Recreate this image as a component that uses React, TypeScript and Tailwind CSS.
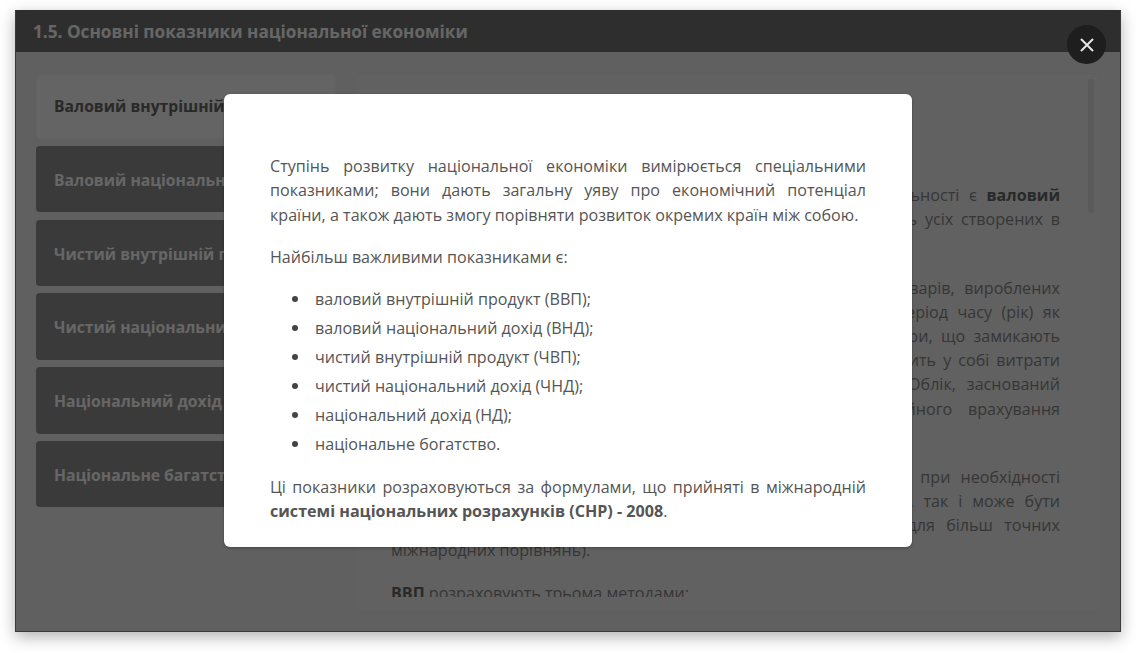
const tabs = [
  "Валовий національний дохід",
  "Чистий внутрішній продукт",
  "Чистий національний дохід",
  "Національний дохід",
  "Національне багатство",
];

const p2 = [
  "ВВП – це сукупна ринкова вартість усіх кінцевих послуг і товарів, вироблених",
  "у межах країни резидентами та нерезидентами за певний період часу (рік) як",
  "сума доданих вартостей, створених у всіх галузях, за всі товари, що замикають",
  "виробничий цикл; ця величина ніде не повторюється і не містить у собі витрати",
  "на проміжне споживання та виключає повторний рахунок. Облік, заснований",
  "на засадах системи національних рахунків, уникає подвійного врахування",
  "виробленої продукції.",
];
const p3 = [
  "ВВП обчислюють у поточних цінах в національній валюті, а при необхідності",
  "може бути перерахований як у долари, так і в іншу валюту, так і може бути",
  "переведений за паритетом купівельної спроможності (ПКС) для більш точних",
  "міжнародних порівнянь).",
];
const list = [
  "валовий внутрішній продукт (ВВП);",
  "валовий національний дохід (ВНД);",
  "чистий внутрішній продукт (ЧВП);",
  "чистий національний дохід (ЧНД);",
  "національний дохід (НД);",
  "національне богатство.",
];

function Lines({ lines }: { lines: string[] }) {
  return (
    <p className="mb-[20px]">
      {lines.map((l, i) => (
        <span
          key={l}
          className={i === lines.length - 1 ? "block" : "block [text-align-last:justify]"}
        >
          {l}
        </span>
      ))}
    </p>
  );
}

export default function App() {
  return (
    <div className="h-[653px] w-[1136px] overflow-hidden bg-white pl-[15px] pt-[10px] font-['Open_Sans',sans-serif]">
      <div className="relative flex h-[622px] w-[1106px] flex-col border-x border-b border-[#3a3a3a] bg-[#f0f0f0] shadow-[0_5px_15px_rgba(0,0,0,0.3)]">
        <header className="flex h-[42px] shrink-0 items-center bg-[#737373] pl-[17px] pt-[1px] text-[17.2px] font-bold text-white">
          1.5. Основні показники національної економіки
        </header>
        <div className="flex min-h-0 flex-1 gap-[20px] pb-[20px] pl-[20px] pr-[21px] pt-[22px]">
          <nav className="flex w-[300px] shrink-0 flex-col gap-[7.3px]">
            <div className="flex h-[64.5px] items-center rounded-[4px] border border-[#f5f5f5] bg-[#fafafa] pl-[17px] pt-[2px] text-[15.7px] font-bold text-[#666]">
              Валовий внутрішній продукт
            </div>
            {tabs.map((t) => (
              <div
                key={t}
                className="flex h-[66.5px] items-center rounded-[4px] bg-[#919191] pl-[18px] pt-[3px] text-[15.7px] font-bold text-white"
              >
                {t}
              </div>
            ))}
          </nav>
          <main className="relative min-w-0 flex-1 rounded-[4px] bg-[#f2f2f2] pb-[14px] shadow-[0_0_2px_rgba(0,0,0,0.05)]">
            <div className="h-full overflow-hidden pl-[35px] pr-[39px] pt-[109px] text-[16.1px] leading-[24.2px] text-[#888]">
              <p className="mb-[20px]">
                <span className="block [text-align-last:justify]">
                  Найважливішим узагальнюючим показником економічної діяльності є <b className="text-[#666]">валовий</b>
                </span>
                <span className="block [text-align-last:justify]">
                  внутрішній продукт (ВВП), що показує сукупну ринкову вартість усіх створених в
                </span>
                <span className="block">даній країні товарів і послуг.</span>
              </p>
              <Lines lines={p2} />
              <Lines lines={p3} />
              <p className="-mt-[1px]">
                <b className="text-[#666]">ВВП</b> розраховують трьома методами:
              </p>
            </div>
            <div className="absolute right-[5px] top-[5px] h-[134px] w-[6px] rounded-full bg-[#e2e2e2]" />
          </main>
        </div>

        <div className="absolute inset-0 flex items-center justify-center bg-black/60">
          <section className="w-[688px] rounded-[6px] bg-white px-[46px] pb-[23.5px] pt-[60px] text-[16.1px] leading-[24.5px] text-[#555] shadow-[0_1px_3px_rgba(0,0,0,0.3)]">
            <p className="mb-[18px] text-justify">
              Ступінь розвитку національної економіки вимірюється спеціальними показниками; вони дають загальну уяву про економічний потенціал країни, а також дають змогу порівняти розвиток окремих країн між собою.
            </p>
            <p className="mb-[17px]">Найбільш важливими показниками є:</p>
            <ul className="mb-[18.5px] pl-[22px]">
              {list.map((l) => (
                <li key={l} className="mb-[4.5px] flex items-center gap-[17px] last:mb-0">
                  <span className="h-[6px] w-[6px] shrink-0 rounded-full bg-[#444]" />
                  {l}
                </li>
              ))}
            </ul>
            <p className="text-justify">
              Ці показники розраховуються за формулами, що прийняті в міжнародній <b>системі національних розрахунків (СНР) - 2008</b>.
            </p>
          </section>
        </div>

        <button className="absolute left-[1051px] top-[15px] flex h-[39px] w-[39px] items-center justify-center rounded-full bg-[#1e1e1e] text-[#e6e6e6]">
          <svg width="16" height="16" viewBox="0 0 16 16" fill="none" stroke="currentColor" strokeWidth="2">
            <path d="M2 2 L14 14 M14 2 L2 14" />
          </svg>
        </button>
      </div>
    </div>
  );
}
